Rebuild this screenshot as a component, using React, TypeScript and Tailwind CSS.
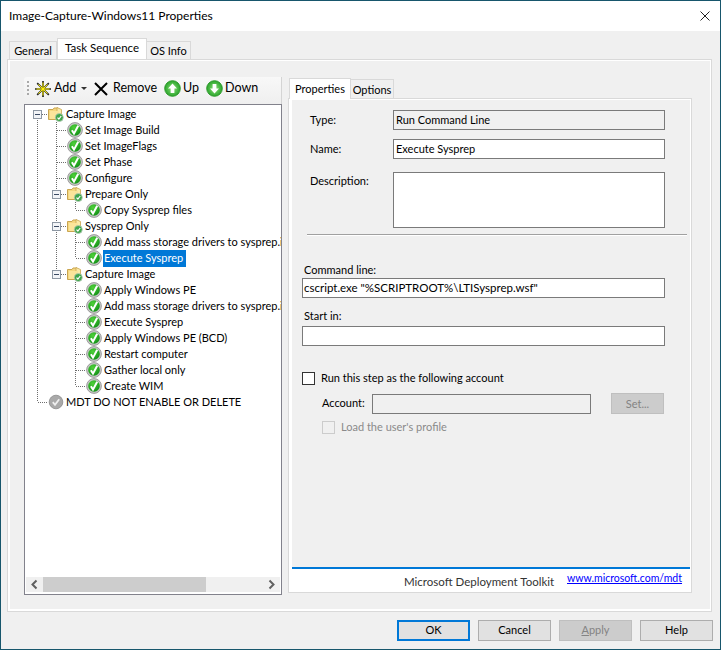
import React from "react";

const FONT = "font-['Lato',sans-serif]";

function Cell({ kind, expander }: { kind: "none" | "vert" | "tee" | "elbow" | "root"; expander?: boolean }) {
  const up = kind === "vert" || kind === "tee" || kind === "elbow";
  const down = kind === "vert" || kind === "tee" || kind === "root";
  const right = kind === "tee" || kind === "elbow" || kind === "root";
  return (
    <svg width="19" height="16" viewBox="0 0 19 16" className="shrink-0" shapeRendering="crispEdges">
      {up && <line x1="9.5" y1="0" x2="9.5" y2="8" stroke="#6e6e6e" strokeDasharray="1 1" />}
      {down && <line x1="9.5" y1="8" x2="9.5" y2="16" stroke="#6e6e6e" strokeDasharray="1 1" />}
      {right && <line x1="10" y1="8.5" x2="19" y2="8.5" stroke="#6e6e6e" strokeDasharray="1 1" />}
      {expander && (
        <>
          <rect x="5.5" y="4.5" width="8" height="8" fill="#f2f4f7" stroke="#8d97a3" />
          <line x1="7" y1="8.5" x2="12" y2="8.5" stroke="#3b4a63" />
        </>
      )}
    </svg>
  );
}

function StepIcon() {
  return (
    <svg width="16" height="16" viewBox="0 0 16 16" className="shrink-0">
      <defs>
        <radialGradient id="stepg" cx="0.4" cy="0.3" r="0.8">
          <stop offset="0" stopColor="#4fd13a" />
          <stop offset="1" stopColor="#0b8a12" />
        </radialGradient>
      </defs>
      <circle cx="8" cy="8" r="7.4" fill="#c9c9c9" stroke="#8a8a8a" strokeWidth="0.8" />
      <circle cx="8" cy="8" r="5.8" fill="url(#stepg)" />
      <path d="M4.9 8.2 L7 11.6 L11.2 3.8" fill="none" stroke="#ffffff" strokeWidth="2" />
    </svg>
  );
}

function GrayIcon() {
  return (
    <svg width="16" height="16" viewBox="0 0 16 16" className="shrink-0">
      <circle cx="8" cy="8" r="6.8" fill="#a9a9a9" stroke="#8a8a8a" strokeWidth="0.8" />
      <path d="M4.8 8.2 L7 10.8 L11.2 5.2" fill="none" stroke="#eeeeee" strokeWidth="1.8" />
    </svg>
  );
}

function FolderIcon() {
  return (
    <svg width="16" height="16" viewBox="0 0 16 16" className="shrink-0">
      <path d="M0.5 3.5 H5 L6 2 H10 V13.5 H0.5 Z" fill="#f5d77f" stroke="#c9a550" />
      <path d="M9 1.5 L13.5 3.5 V10 H9 Z" fill="#fbeaa8" stroke="#c9a550" strokeWidth="0.8" />
      <rect x="2" y="5" width="9" height="8" fill="#fbe49a" />
      <circle cx="11.3" cy="11.5" r="4" fill="#3fa64a" stroke="#b9c9bb" strokeWidth="0.8" />
      <path d="M9.5 11.6 L10.9 13 L13.2 10" fill="none" stroke="#ffffff" strokeWidth="1.2" />
    </svg>
  );
}

type Row = {
  cells: [React.ComponentProps<typeof Cell>["kind"], boolean?][];
  icon: "step" | "folder" | "gray";
  text: string;
  selected?: boolean;
};

const rows: Row[] = [
  { cells: [["root", true]], icon: "folder", text: "Capture Image" },
  { cells: [["vert"], ["tee"]], icon: "step", text: "Set Image Build" },
  { cells: [["vert"], ["tee"]], icon: "step", text: "Set ImageFlags" },
  { cells: [["vert"], ["tee"]], icon: "step", text: "Set Phase" },
  { cells: [["vert"], ["tee"]], icon: "step", text: "Configure" },
  { cells: [["vert"], ["tee", true]], icon: "folder", text: "Prepare Only" },
  { cells: [["vert"], ["vert"], ["elbow"]], icon: "step", text: "Copy Sysprep files" },
  { cells: [["vert"], ["tee", true]], icon: "folder", text: "Sysprep Only" },
  { cells: [["vert"], ["vert"], ["tee"]], icon: "step", text: "Add mass storage drivers to sysprep.inf" },
  { cells: [["vert"], ["vert"], ["elbow"]], icon: "step", text: "Execute Sysprep", selected: true },
  { cells: [["vert"], ["elbow", true]], icon: "folder", text: "Capture Image" },
  { cells: [["vert"], ["none"], ["tee"]], icon: "step", text: "Apply Windows PE" },
  { cells: [["vert"], ["none"], ["tee"]], icon: "step", text: "Add mass storage drivers to sysprep.inf" },
  { cells: [["vert"], ["none"], ["tee"]], icon: "step", text: "Execute Sysprep" },
  { cells: [["vert"], ["none"], ["tee"]], icon: "step", text: "Apply Windows PE (BCD)" },
  { cells: [["vert"], ["none"], ["tee"]], icon: "step", text: "Restart computer" },
  { cells: [["vert"], ["none"], ["tee"]], icon: "step", text: "Gather local only" },
  { cells: [["vert"], ["none"], ["elbow"]], icon: "step", text: "Create WIM" },
  { cells: [["elbow"]], icon: "gray", text: "MDT DO NOT ENABLE OR DELETE" },
];

function TreeRow({ row }: { row: Row }) {
  return (
    <div className="flex h-4 items-center whitespace-nowrap">
      {row.cells.map((c, i) => (
        <Cell key={i} kind={c[0]} expander={c[1]} />
      ))}
      <div className="flex ml-[1px] items-center">
        {row.icon === "step" && <StepIcon />}
        {row.icon === "folder" && <FolderIcon />}
        {row.icon === "gray" && <GrayIcon />}
        <span
          className={
            row.selected
              ? "ml-[1px] pl-[1px] pr-[3px] h-[17px] leading-[16px] bg-[#0078d7] text-white"
              : "ml-[1px] px-[1px] leading-[16px]"
          }
        >
          {row.text}
        </span>
      </div>
    </div>
  );
}

function RoundArrow({ up }: { up?: boolean }) {
  return (
    <svg width="17" height="17" viewBox="0 0 17 17" className="shrink-0">
      <defs>
        <radialGradient id="roundg" cx="0.5" cy="0.5" r="0.6">
          <stop offset="0" stopColor="#8fe07a" />
          <stop offset="1" stopColor="#169a1c" />
        </radialGradient>
      </defs>
      <circle cx="8.5" cy="8.5" r="7.8" fill="url(#roundg)" stroke="#2f9a2c" />
      <path
        d={up ? "M8.5 3.5 L13 8.5 H10.4 V13 H6.6 V8.5 H4 Z" : "M8.5 13.5 L13 8.5 H10.4 V4 H6.6 V8.5 H4 Z"}
        fill="#ffffff"
      />
    </svg>
  );
}

function Toolbar() {
  return (
    <div className="h-[27px] flex items-center rounded-tl-[3px] bg-gradient-to-b from-[#f8f8f8] to-[#efefef] border-r border-[#d4d4d4] text-[12.5px] pb-[4px]">
      <svg width="4" height="17" viewBox="0 0 4 17" className="ml-[2px] shrink-0" shapeRendering="crispEdges">
        {[1, 5, 9, 13].map((y) => (
          <rect key={y} x="1" y={y} width="2" height="2" fill="#a9a9a9" />
        ))}
      </svg>
      <svg width="16" height="16" viewBox="0 0 16 16" className="ml-[5px] shrink-0">
        <path d="M8 0 V16 M0 8 H16 M2.2 2.2 L13.8 13.8 M13.8 2.2 L2.2 13.8" stroke="#222222" strokeWidth="1.7" />
        <path d="M8 1.5 V14.5 M1.5 8 H14.5 M3.4 3.4 L12.6 12.6 M12.6 3.4 L3.4 12.6" stroke="#fff200" strokeWidth="1" />
        <circle cx="8" cy="8" r="1.6" fill="#fff200" />
      </svg>
      <span className="ml-[3px] w-[22px]">Add</span>
      <svg width="6" height="3" viewBox="0 0 6 3" className="ml-[5px] shrink-0">
        <path d="M0 0 H6 L3 3 Z" fill="#333333" />
      </svg>
      <svg width="14" height="14" viewBox="0 0 14 14" className="ml-[7px] shrink-0">
        <path d="M1 1 L13 13 M13 1 L1 13" stroke="#000000" strokeWidth="2" />
      </svg>
      <span className="ml-[5px] w-[43px]">Remove</span>
      <span className="ml-[8px]">
        <RoundArrow up />
      </span>
      <span className="ml-[2px] w-[15px]">Up</span>
      <span className="ml-[8px]">
        <RoundArrow />
      </span>
      <span className="ml-[2px]">Down</span>
    </div>
  );
}

function Chevron({ left }: { left?: boolean }) {
  return (
    <svg width="17" height="15" viewBox="0 0 17 15" className="shrink-0">
      <path
        d={left ? "M10.5 3.5 L6.5 7.5 L10.5 11.5" : "M6.5 3.5 L10.5 7.5 L6.5 11.5"}
        fill="none"
        stroke="#606060"
        strokeWidth="2"
      />
    </svg>
  );
}

function LeftColumn() {
  return (
    <div className="w-[258px] flex flex-col h-[518px]">
      <Toolbar />
      <div className="flex-1 flex flex-col min-h-0 border border-[#82828c] bg-white">
        <div className="flex-1 pl-[3px] pt-[1px] overflow-hidden">
          {rows.map((r, i) => (
            <TreeRow key={i} row={r} />
          ))}
        </div>
        <div className="h-[15px] mx-[1px] mb-[2px] flex bg-[#f0f0f0]">
          <Chevron left />
          <div className="w-[163px] bg-[#cdcdcd]" />
          <div className="flex-1" />
          <Chevron />
        </div>
      </div>
    </div>
  );
}

const fieldBox = "border border-[#7a7a7a] h-5 pl-[2px] leading-[18px] bg-white";

function RightColumn() {
  return (
    <div className="w-[404px] ml-[6px] flex flex-col">
      <div className="flex items-end h-[21px] pl-[1px]">
        <div className="w-[62px] h-[21px] bg-white border border-b-0 border-[#d9d9d9] text-center leading-[19px] relative top-[1px]">
          Properties
        </div>
        <div className="w-[43px] h-[19px] border border-l-0 border-b-0 border-[#d9d9d9] text-center leading-[20px]">
          Options
        </div>
      </div>
      <div className="h-[495px] border border-[#d9d9d9] bg-white flex flex-col">
        <div className="flex-1 bg-[#f0f0f0] ml-[3px] mr-[1px] mt-[1px] pt-[10px] flex flex-col">
          <div className="flex h-5 items-center pl-[18px]">
            <span className="w-[83px]">Type:</span>
            <div className={`${fieldBox} w-[272px] !bg-[#f0f0f0]`}>Run Command Line</div>
          </div>
          <div className="flex h-5 items-center pl-[18px] mt-[9px]">
            <span className="w-[83px]">Name:</span>
            <div className={`${fieldBox} w-[272px]`}>Execute Sysprep</div>
          </div>
          <div className="flex pl-[18px] mt-[13px]">
            <span className="w-[83px] leading-[18px]">Description:</span>
            <div className="border border-[#7a7a7a] w-[272px] h-[56px] bg-white" />
          </div>
          <div className="ml-[15px] w-[380px] mt-[6px] h-[2px] border-t border-[#a0a0a0] border-b-[#ffffff] border-b" />
          <div className="ml-[12px] mt-[26px] h-4 leading-4">Command line:</div>
          <div className={`${fieldBox} ml-[10px] w-[363px] !pl-[1px] text-[11.5px]`}>
            cscript.exe "%SCRIPTROOT%\LTISysprep.wsf"
          </div>
          <div className="ml-[12px] mt-[10px] h-4 leading-4">Start in:</div>
          <div className={`${fieldBox} ml-[10px] w-[363px] mt-[2px]`} />
          <div className="flex items-center ml-[10px] mt-[26px] h-[13px]">
            <div className="w-[13px] h-[13px] border border-[#333333] bg-white" />
            <span className="ml-[6px]">Run this step as the following account</span>
          </div>
          <div className="flex items-center ml-[30px] mt-[8px] h-[21px]">
            <span className="w-[50px]">Account:</span>
            <div className="w-[219px] h-5 border border-[#7a7a7a] bg-[#f0f0f0]" />
            <div className="ml-[20px] w-[53px] h-[21px] bg-[#cccccc] border border-[#bfbfbf] text-center leading-[19px] text-[#838383]">
              Set...
            </div>
          </div>
          <div className="flex items-center ml-[30px] mt-[7px] h-[13px] text-[#8a8a8a]">
            <div className="w-[13px] h-[13px] border border-[#cccccc] bg-[#f0f0f0]" />
            <span className="ml-[6px]">Load the user's profile</span>
          </div>
        </div>
        <div className="h-[2px] bg-[#0078d7] ml-[3px] mr-[1px]" />
        <div className="h-[23px] flex pl-[115px] text-[#333333] whitespace-nowrap">
          <span className="leading-[26px] w-[149px] text-[11.5px]">Microsoft Deployment Toolkit</span>
          <a className="ml-[14px] leading-[18px] text-[#0000ff] underline text-[10.5px]">www.microsoft.com/mdt</a>
        </div>
      </div>
    </div>
  );
}

function Btn({ children, kind }: { children: React.ReactNode; kind?: "ok" | "off" }) {
  const base = "w-[73px] h-[21px] flex items-center justify-center";
  if (kind === "ok") return <div className={`${base} bg-[#e1e1e1] border-2 border-[#0078d7]`}>{children}</div>;
  if (kind === "off")
    return <div className={`${base} bg-[#cccccc] border border-[#bfbfbf] text-[#838383]`}>{children}</div>;
  return <div className={`${base} bg-[#e1e1e1] border border-[#adadad]`}>{children}</div>;
}

export default function App() {
  return (
    <div className={`w-[721px] h-[650px] border border-[#17566c] flex flex-col overflow-hidden bg-[#f0f0f0] text-[11px] text-black ${FONT}`}>
      <div className="h-[30px] shrink-0 bg-white flex items-center justify-between pl-2 pr-[10px]">
        <span className="text-[12px]">Image-Capture-Windows11 Properties</span>
        <svg width="10" height="10" viewBox="0 0 10 10" className="shrink-0">
          <path d="M0.5 0.5 L9.5 9.5 M9.5 0.5 L0.5 9.5" stroke="#222222" strokeWidth="1" />
        </svg>
      </div>
      <div className="flex items-end h-[28px] pl-[8px] shrink-0">
        <div className="w-[48px] h-[18px] border border-b-0 border-[#d9d9d9] text-center leading-[18px]">General</div>
        <div className="w-[90px] h-[21px] bg-white border border-b-0 border-[#d9d9d9] text-center leading-[18px] text-[11.5px]">
          Task Sequence
        </div>
        <div className="w-[44px] h-[18px] border border-l-0 border-b-0 border-[#d9d9d9] text-center leading-[18px]">
          OS Info
        </div>
      </div>
      <div className="ml-[6px] mr-[8px] h-[553px] shrink-0 border border-[#d9d9d9] bg-white p-[2px] pt-[1px] pr-[1px]">
        <div className="h-full bg-[#f0f0f0] pl-[14px] pt-[16px] flex">
          <LeftColumn />
          <RightColumn />
        </div>
      </div>
      <div className="flex-1 flex justify-end gap-2 pt-2 pr-[7px]">
        <Btn kind="ok">OK</Btn>
        <Btn>Cancel</Btn>
        <Btn kind="off">
          <span>
            <span className="underline">A</span>pply
          </span>
        </Btn>
        <Btn>Help</Btn>
      </div>
    </div>
  );
}
